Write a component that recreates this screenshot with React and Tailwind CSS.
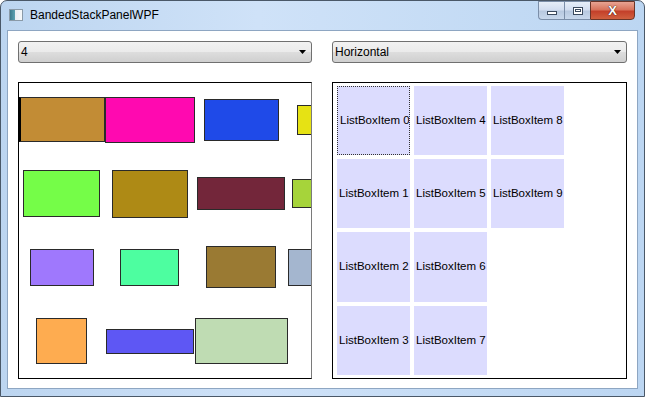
import React from "react";

const font = { fontFamily: '"Liberation Sans", Arial, sans-serif' };

const bands = [
  [
    "ml-0 w-[86px] h-[45px] bg-[#c28c35] border-l-2 border-l-black",
    "ml-0 w-[90px] h-[46px] bg-[#ff09b0]",
    "ml-[9px] w-[75px] h-[42px] bg-[#1f4ae8]",
    "ml-[18px] w-[30px] h-[30px] bg-[#e6e214]",
  ],
  [
    "ml-[4px] w-[77px] h-[47px] bg-[#75fd48]",
    "ml-[12px] w-[76px] h-[48px] bg-[#ae8a15]",
    "ml-[9px] w-[88px] h-[33px] bg-[#73263a]",
    "ml-[7px] w-[30px] h-[29px] bg-[#a6d43a]",
  ],
  [
    "ml-[11px] w-[64px] h-[37px] bg-[#9f78fd]",
    "ml-[26px] w-[59px] h-[37px] bg-[#4dfea0]",
    "ml-[27px] w-[70px] h-[42px] bg-[#9a7a33]",
    "ml-[12px] w-[30px] h-[37px] bg-[#a4b6cf]",
  ],
  [
    "ml-[17px] w-[51px] h-[46px] bg-[#feac50]",
    "ml-[19px] w-[88px] h-[25px] bg-[#5e57f4]",
    "ml-[1px] w-[93px] h-[46px] bg-[#bfdcb3]",
  ],
];

const items = [0, 1, 2, 3, 4, 5, 6, 7, 8, 9];

function Combo({ value }) {
  return (
    <div className="h-[22px] border border-[#707070] rounded-[3px] bg-[linear-gradient(#f2f2f2_0%,#ebebeb_48%,#dddddd_52%,#cfcfcf_100%)] flex items-center pl-[2px] pr-[5px]">
      <span className="flex-1 text-[12px] text-black leading-none">{value}</span>
      <svg width="7" height="4" viewBox="0 0 7 4">
        <path d="M0 0 L7 0 L3.5 4 Z" fill="#000" />
      </svg>
    </div>
  );
}

function CaptionButton({ kind }) {
  if (kind === "close") {
    return (
      <div className="w-[45px] h-[19px] border border-[#6b3528] rounded-br-[4px] bg-[linear-gradient(#e8a493_0%,#d8735c_45%,#c4402a_55%,#d0603f_100%)] flex items-center justify-center">
        <span
          className="text-white font-bold text-[13px] leading-none"
          style={{ textShadow: "0 0 1px #3a1a10, 0 0 1px #3a1a10" }}
        >
          X
        </span>
      </div>
    );
  }
  return (
    <div className="w-[26px] h-[19px] border border-[#7b8ea8] border-r-0 first:rounded-bl-[4px] bg-[linear-gradient(#e6eef8_0%,#d3def0_45%,#b8c9e0_55%,#c8d8ec_100%)] flex items-center justify-center">
      {kind === "min" ? (
        <div className="w-[10px] h-[4px] mt-[5px] bg-white border border-[#3b4a5e]" />
      ) : (
        <div className="w-[10px] h-[8px] border border-[#3b4a5e] bg-white flex items-center justify-center">
          <div className="w-[6px] h-[3px] border border-[#3b4a5e]" />
        </div>
      )}
    </div>
  );
}

export default function App() {
  return (
    <div
      className="w-[645px] h-[397px] bg-[linear-gradient(90deg,#bcd5f0,#cfe2f8_40%,#bcd6f2)] border border-[#4a5868] rounded-t-[7px] flex flex-col overflow-hidden"
      style={font}
    >
      <div className="h-[29px] flex items-start shrink-0">
        <div className="flex items-center h-[27px] pl-[8px] flex-1">
          <div className="w-[14px] h-[12px] border border-[#8a9aa8] bg-[linear-gradient(90deg,#3b7a8c_0%,#5aa0b0_40%,#e8eef2_45%,#f6f8fa_100%)]" />
          <span className="ml-[7px] text-[12px] text-black">BandedStackPanelWPF</span>
        </div>
        <div className="flex mr-[9px]">
          <CaptionButton kind="min" />
          <CaptionButton kind="max" />
          <CaptionButton kind="close" />
        </div>
      </div>
      <div className="flex-1 mx-[6px] mb-[7px] bg-white border border-[#8ea6c2] grid grid-cols-[294px_295px] grid-rows-[22px_297px] gap-x-[20px] gap-y-[19px] pl-[10px] pt-[10px]">
        <Combo value="4" />
        <Combo value="Horizontal" />
        <div className="border border-black border-r-[#7a7a7a] flex flex-col overflow-hidden">
          {bands.map((band, i) => (
            <div key={i} className="flex-1 flex items-center overflow-hidden">
              {band.map((cls, j) => (
                <div key={j} className={`shrink-0 border border-[#2a2a2a] ${cls}`} />
              ))}
            </div>
          ))}
        </div>
        <div className="border border-black pl-[4px] pt-[3px] grid grid-flow-col grid-rows-[69px_69px_70px_69px] auto-cols-[73px] gap-[4px] content-start justify-start">
          {items.map((n) => (
            <div
              key={n}
              className={`bg-[#dcdcfe] flex items-center pl-[2px] text-[11.5px] text-black whitespace-nowrap overflow-hidden ${
                n === 0 ? "border border-dotted border-[#333]" : ""
              }`}
            >
              ListBoxItem {n}
            </div>
          ))}
        </div>
      </div>
    </div>
  );
}
